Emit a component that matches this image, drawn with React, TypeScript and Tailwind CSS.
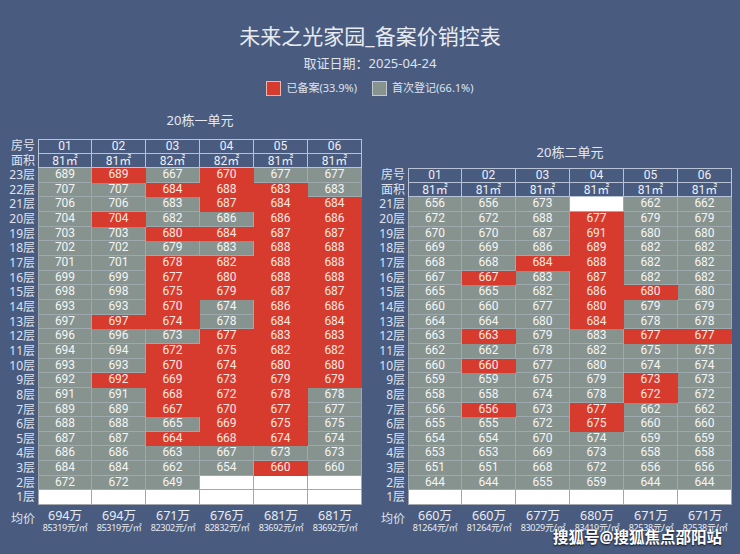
type Cell = [number | null, 'R' | 'G' | 'W']

const font = { fontFamily: '"Noto Sans", "Noto Sans CJK SC", sans-serif' }

// 20栋一单元
const unitOne = {
  title: '20栋一单元',
  areas: ['81㎡', '81㎡', '82㎡', '82㎡', '81㎡', '81㎡'],
  rows: [
    ['23层', '689G 689R 667G 670R 677G 677G'],
    ['22层', '707G 707G 684R 688R 683R 683G'],
    ['21层', '706G 706G 683G 687R 684R 684R'],
    ['20层', '704G 704R 682G 686G 686R 686R'],
    ['19层', '703G 703G 680R 684R 687R 687R'],
    ['18层', '702G 702G 679G 683G 688R 688R'],
    ['17层', '701G 701G 678R 682R 688R 688R'],
    ['16层', '699G 699G 677R 680R 688R 688R'],
    ['15层', '698G 698G 675R 679R 687R 687R'],
    ['14层', '693G 693G 670R 674G 686R 686R'],
    ['13层', '697G 697R 674R 678G 684R 684R'],
    ['12层', '696G 696G 673G 677R 683R 683R'],
    ['11层', '694G 694G 672R 675R 682R 682R'],
    ['10层', '693G 693G 670R 674R 680R 680R'],
    ['9层', '692G 692R 669R 673R 679R 679R'],
    ['8层', '691G 691G 668R 672R 678R 678G'],
    ['7层', '689G 689G 667R 670R 677R 677G'],
    ['6层', '688G 688G 665G 669R 675R 675G'],
    ['5层', '687G 687G 664R 668R 674R 674G'],
    ['4层', '686G 686G 663G 667G 673G 673G'],
    ['3层', '684G 684G 662G 654G 660R 660G'],
    ['2层', '672G 672G 649G W W W'],
    ['1层', 'W W W W W W'],
  ],
  avg: [
    ['694万', '85319元/㎡'],
    ['694万', '85319元/㎡'],
    ['671万', '82302元/㎡'],
    ['676万', '82832元/㎡'],
    ['681万', '83692元/㎡'],
    ['681万', '83692元/㎡'],
  ],
}

// 20栋二单元
const unitTwo = {
  title: '20栋二单元',
  areas: ['81㎡', '81㎡', '81㎡', '81㎡', '81㎡', '81㎡'],
  rows: [
    ['21层', '656G 656G 673G W 662G 662G'],
    ['20层', '672G 672G 688G 677R 679G 679G'],
    ['19层', '670G 670G 687G 691R 680G 680G'],
    ['18层', '669G 669G 686G 689R 682G 682G'],
    ['17层', '668G 668G 684R 688R 682G 682G'],
    ['16层', '667G 667R 683G 687R 682G 682G'],
    ['15层', '665G 665G 682G 686R 680R 680G'],
    ['14层', '660G 660G 677G 680R 679G 679G'],
    ['13层', '664G 664G 680G 684R 678G 678G'],
    ['12层', '663G 663R 679G 683G 677R 677R'],
    ['11层', '662G 662G 678G 682G 675G 675G'],
    ['10层', '660G 660R 677G 680G 674G 674G'],
    ['9层', '659G 659G 675G 679G 673R 673G'],
    ['8层', '658G 658G 674G 678G 672R 672G'],
    ['7层', '656G 656R 673G 677R 662G 662G'],
    ['6层', '655G 655G 672G 675R 660G 660G'],
    ['5层', '654G 654G 670G 674G 659G 659G'],
    ['4层', '653G 653G 669G 673G 658G 658G'],
    ['3层', '651G 651G 668G 672G 656G 656G'],
    ['2层', '644G 644G 655G 659G 644G 644G'],
    ['1层', 'W W W W W W'],
  ],
  avg: [
    ['660万', '81264元/㎡'],
    ['660万', '81264元/㎡'],
    ['677万', '83029元/㎡'],
    ['680万', '83419元/㎡'],
    ['671万', '82538元/㎡'],
    ['671万', '82538元/㎡'],
  ],
}

function parse(s: string): Cell[] {
  return s.split(' ').map((t) => {
    if (t === 'W') return [null, 'W']
    return [Number(t.slice(0, -1)), t.slice(-1) as 'R' | 'G']
  })
}

const cellStyle = {
  R: 'bg-[#d63b2d] border-[#d63b2d] text-[#fbe7e3]',
  G: 'bg-[#87938f] border-[#9ea9ad] text-[#f4f5f4]',
  W: 'bg-white border-[#a3a8ae] text-transparent',
}

function Unit({ data, titleGap }: { data: typeof unitOne; titleGap: string }) {
  return (
    <div className="w-[354px] flex flex-col">
      <div className={`text-center text-[13px] leading-[20px] text-[#e4e8f0] pl-[30px] ${titleGap}`}>{data.title}</div>

      <div className="grid grid-cols-[30px_repeat(6,54px)]">
        <div className="h-[14.5px] text-right pr-[3px] text-[12px] leading-[14.5px] text-[#dde3ee]">房号</div>
        {['01', '02', '03', '04', '05', '06'].map((n, i) => (
          <div
            key={n}
            className={`h-[14.5px] border-t border-r border-b border-[#b9c3d6] text-center font-['Roboto'] text-[12px] leading-[13px] text-[#eef1f6] ${i === 0 ? 'border-l' : ''}`}
          >
            {n}
          </div>
        ))}
        <div className="h-[14.5px] text-right pr-[3px] text-[12px] leading-[14.5px] text-[#dde3ee]">面积</div>
        {data.areas.map((a, i) => (
          <div
            key={i}
            className={`h-[14.5px] border-r border-b border-[#b9c3d6] text-center text-[12px] leading-[13.5px] text-[#eef1f6] ${i === 0 ? 'border-l' : ''}`}
          >
            <span className="font-['Roboto']">{a.slice(0, -1)}</span>
            <span>{a.slice(-1)}</span>
          </div>
        ))}

        {data.rows.map(([floor, vals]) => (
          <Row key={floor} floor={floor} cells={parse(vals)} />
        ))}

        <div className="pt-[7px] text-right pr-[3px] text-[12px] leading-[14px] text-[#dde3ee]">均价</div>
        {data.avg.map(([total, unit], i) => (
          <div key={i} className="pt-[4px] pb-[4px] flex flex-col items-center text-[#e8ecf3]">
            <span className="text-[12.5px] leading-[14px]">{total}</span>
            <span className="text-[9px] leading-[10px] tracking-[-0.3px]">{unit}</span>
          </div>
        ))}
      </div>
    </div>
  )
}

function Row({ floor, cells }: { floor: string; cells: Cell[] }) {
  return (
    <>
      <div className="h-[14.67px] text-right pr-[3px] text-[12px] leading-[14.67px] text-[#dde3ee]">{floor}</div>
      {cells.map(([v, s], i) => (
        <div
          key={i}
          className={`h-[14.67px] border-r border-b text-center font-['Roboto'] text-[12px] leading-[13.67px] ${cellStyle[s]} ${i === 0 ? 'border-l' : ''}`}
        >
          {v ?? ''}
        </div>
      ))}
    </>
  )
}

export default function App() {
  return (
    <div className="relative w-[740px] h-[554px] overflow-hidden bg-[#4a5b80]" style={font}>
      <div className="flex flex-col items-center pt-[22px]">
        <h1 className="text-[21px] leading-[28px] text-[#e8ebf1]">未来之光家园_备案价销控表</h1>
        <div className="mt-[4px] text-[13px] leading-[18px] text-[#dfe3eb]">取证日期：2025-04-24</div>
        <div className="mt-[8px] flex items-center text-[11px] leading-[16px] text-[#dfe3eb]">
          <span className="w-[15px] h-[15px] bg-[#d63b2d] border border-[#e9b8b0]" />
          <span className="ml-[5px]">已备案(33.9%)</span>
          <span className="ml-[15px] w-[15px] h-[15px] bg-[#87938f] border border-[#c3c9c8]" />
          <span className="ml-[5px]">首次登记(66.1%)</span>
        </div>
      </div>

      <div className="mt-[14px] px-[8px] flex items-end gap-[16px]">
        <Unit data={unitOne} titleGap="mb-[9px]" />
        <Unit data={unitTwo} titleGap="mb-[6px]" />
      </div>

      <div className="absolute right-[18px] bottom-[7px] text-[15.5px] font-bold leading-[20px] text-white [text-shadow:0_1px_2px_rgba(0,0,0,0.85)]">
        搜狐号@搜狐焦点邵阳站
      </div>
    </div>
  )
}
